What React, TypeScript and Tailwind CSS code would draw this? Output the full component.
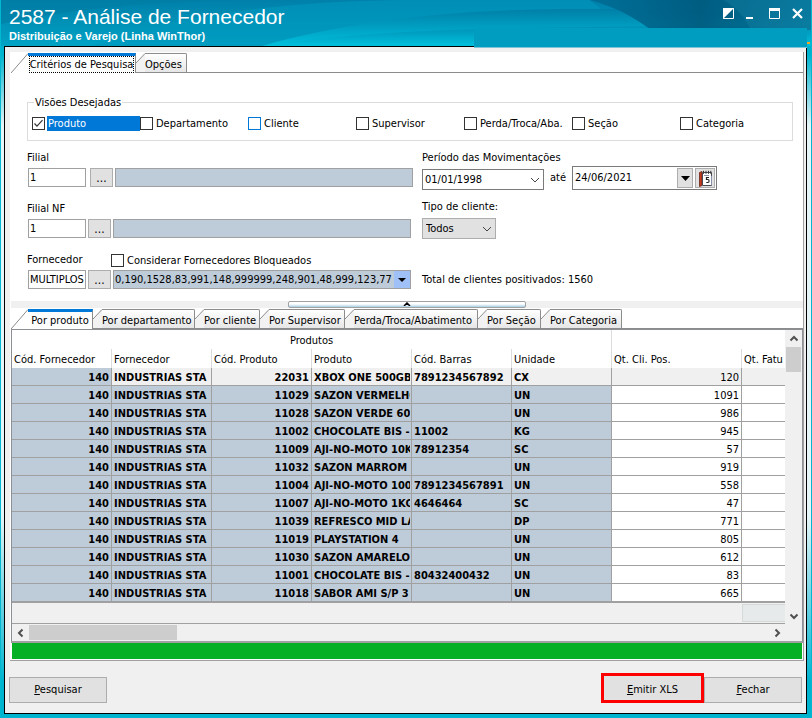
import type { ReactNode } from "react";
import clsx from "clsx";

const views = [
  { label: "Produto", state: "checked" },
  { label: "Departamento", state: "idle" },
  { label: "Cliente", state: "hover" },
  { label: "Supervisor", state: "idle" },
  { label: "Perda/Troca/Aba.", state: "idle" },
  { label: "Seção", state: "idle" },
  { label: "Categoria", state: "idle" },
];

const resultTabs = [
  { label: "Por departamento", width: "w-[102px]" },
  { label: "Por cliente", width: "w-[65px]" },
  { label: "Por Supervisor", width: "w-[85px]" },
  { label: "Perda/Troca/Abatimento", width: "w-[133px]" },
  { label: "Por Seção", width: "w-[63px]" },
  { label: "Por Categoria", width: "w-[81px]" },
];

const columns = ["Cód. Fornecedor", "Fornecedor", "Cód. Produto", "Produto", "Cód. Barras", "Unidade", "Qt. Cli. Pos.", "Qt. Fatu"];

const rows = [
  ["22031", "XBOX ONE 500GBE", "7891234567892", "CX", "120"],
  ["11029", "SAZON VERMELHO", "", "UN", "1091"],
  ["11028", "SAZON VERDE 60G", "", "UN", "986"],
  ["11002", "CHOCOLATE BIS -", "11002", "KG", "945"],
  ["11009", "AJI-NO-MOTO 10K", "78912354", "SC", "57"],
  ["11032", "SAZON MARROM", "", "UN", "919"],
  ["11004", "AJI-NO-MOTO 100", "7891234567891", "UN", "558"],
  ["11007", "AJI-NO-MOTO 1KG", "4646464", "SC", "47"],
  ["11039", "REFRESCO MID LA", "", "DP", "771"],
  ["11019", "PLAYSTATION 4", "", "UN", "805"],
  ["11030", "SAZON AMARELO", "", "UN", "612"],
  ["11001", "CHOCOLATE BIS -", "80432400432", "UN", "83"],
  ["11018", "SABOR AMI S/P 3", "", "UN", "665"],
];

function Chevron({ direction }: { direction: "up" | "down" | "left" | "right" }) {
  const paths = {
    up: "M1.5 6.5 5 3l3.5 3.5",
    down: "M1.5 3.5 5 7l3.5-3.5",
    left: "M6.5 1.5 3 5l3.5 3.5",
    right: "M3.5 1.5 7 5 3.5 8.5",
  };
  return (
    <svg viewBox="0 0 10 10" className="w-[10px] h-[10px]" fill="none" stroke="#505050" strokeWidth="2">
      <path d={paths[direction]} />
    </svg>
  );
}

function ActiveTab({ children, width, focused }: { children: ReactNode; width: string; focused?: boolean }) {
  return (
    <button role="tab" aria-selected="true" className="flex h-full items-stretch">
      <svg viewBox="0 0 17 20" className="w-[17px] h-full" preserveAspectRatio="none">
        <path d="M0 20 17 .5" stroke="#8c8c8c" fill="none" />
      </svg>
      <span className={clsx("flex items-center justify-center whitespace-nowrap border-t-[3px] border-r border-t-[#0078d7] border-r-[#8c8c8c]", width)}>
        <span className={clsx("pt-px", focused && "outline outline-1 outline-dotted outline-black")}>{children}</span>
      </span>
    </button>
  );
}

function Tab({ children, width }: { children: ReactNode; width: string }) {
  return (
    <button role="tab" aria-selected="false" className={clsx("flex h-full items-stretch border-b border-[#8c8c8c]", width)}>
      <svg viewBox="0 0 9 19" className="w-[9px] h-full shrink-0" preserveAspectRatio="none">
        <path d="M0 10 9 .5V19H0z" fill="#f2f2f2" />
        <path d="M0 10 9 .5" stroke="#8c8c8c" fill="none" />
      </svg>
      <span className="flex flex-1 items-center pt-1 whitespace-nowrap border-t border-r border-[#8c8c8c] rounded-tr-xs bg-linear-to-b from-white to-[#e6e6e6]">
        {children}
      </span>
    </button>
  );
}

function Check({ label, state = "idle" }: { label: string; state?: string }) {
  return (
    <label className="flex items-center gap-0.5 h-[14px]">
      <span className="relative w-[13px] h-[13px] shrink-0">
        <input
          type="checkbox"
          defaultChecked={state === "checked"}
          className={clsx(
            "peer block appearance-none w-[13px] h-[13px] border bg-white",
            state === "hover" ? "border-[#0078d7]" : "border-[#333333]"
          )}
        />
        <svg viewBox="0 0 13 13" className="hidden peer-checked:block absolute inset-0 pointer-events-none" fill="none" stroke="#333" strokeWidth="1.2">
          <path d="M2.5 6.5 5 9.2l5.5-6" />
        </svg>
      </span>
      <span className={clsx("px-px h-[15px] leading-4 whitespace-nowrap", state === "checked" && "flex-1 bg-[#0078d7] text-white")}>{label}</span>
    </label>
  );
}

function Lookup({ id, label, value, gap, children }: { id: string; label: ReactNode; value: string; gap: string; children: ReactNode }) {
  return (
    <div>
      <div className="flex h-[14px] items-center mb-[3px] leading-4">{label}</div>
      <div className="flex h-[19px] pl-px">
        <input id={id} type="text" defaultValue={value} className="w-[58px] border border-[#a0a0a0] bg-white px-px" />
        <button className={clsx("w-[23px] border border-[#adadad] bg-[#e1e1e1] mr-0.5 text-xs leading-3", gap)}>...</button>
        {children}
      </div>
    </div>
  );
}

function TitleBar() {
  return (
    <header className="relative h-[46px] overflow-hidden text-white">
      <svg viewBox="0 0 812 46" preserveAspectRatio="none" className="absolute inset-0 w-full h-full">
        <defs>
          <linearGradient id="base" x1="0" y1="0" x2="0" y2="1">
            <stop offset="0" stopColor="#0080aa" />
            <stop offset="1" stopColor="#00a3c4" />
          </linearGradient>
          <linearGradient id="swell" x1="0" y1="0" x2="0" y2="1">
            <stop offset="0" stopColor="#007fa8" />
            <stop offset="1" stopColor="#00c0dc" />
          </linearGradient>
          <linearGradient id="corner" x1="0" y1="0" x2="1" y2="0">
            <stop offset="0" stopColor="#006c95" />
            <stop offset="0.5" stopColor="#00567a" />
            <stop offset="1" stopColor="#007095" />
          </linearGradient>
        </defs>
        <path fill="url(#base)" d="M0 0h812v46H0z" />
        <path fill="#0098be" d="M90 46C180 14 280 2 400 0h190l60 46z" opacity=".6" />
        <path fill="url(#swell)" d="M262 46C370 14 500 8 600 9c80 0 140 2 212 8v29z" />
        <path fill="url(#swell)" d="M262 46C370 30 480 26 812 26v20z" opacity=".5" />
        <path fill="url(#corner)" d="M590 0c30 8 48 20 62 30h160V0z" opacity=".85" />
        <path fill="#2794b5" d="M724 0c14 8 22 18 28 30h60V0z" opacity=".22" />
        <path fill="#007da3" d="M0 0h230C150 2 60 10 0 24z" opacity=".6" />
      </svg>
      <div className="relative flex justify-between px-2 pt-[5px] font-['Liberation_Sans',sans-serif]">
        <div>
          <h1 className="text-[21px] leading-6">2587 - Análise de Fornecedor</h1>
          <p className="text-[11px] leading-[14px] font-bold">Distribuição e Varejo (Linha WinThor)</p>
        </div>
        <div className="flex h-4 items-center gap-3">
          <button aria-label="Tema">
            <svg viewBox="0 0 11 11" className="w-[11px] h-[11px]">
              <path d="M.5.5h10v10H.5z" fill="#005f83" stroke="#fff" />
              <path d="M0 0h11L0 11z" fill="#fff" />
            </svg>
          </button>
          <button aria-label="Minimizar">
            <svg viewBox="0 0 11 11" className="w-[11px] h-[11px]">
              <path d="M0 9h7v2H0z" fill="#fff" />
            </svg>
          </button>
          <button aria-label="Maximizar">
            <svg viewBox="0 0 11 11" className="w-[11px] h-[11px]">
              <path d="M.5.5h10v10H.5z" fill="none" stroke="#fff" />
              <path d="M0 0h11v3H0z" fill="#fff" />
            </svg>
          </button>
          <button aria-label="Fechar janela">
            <svg viewBox="0 0 11 11" className="w-[11px] h-[11px]">
              <path d="m1 1 9 9m0-9-9 9" stroke="#fff" strokeWidth="2.2" />
            </svg>
          </button>
        </div>
      </div>
    </header>
  );
}

function Criteria() {
  return (
    <div className="pl-[17px] pr-3 pb-3">
      <fieldset className="border border-[#dcdcdc] mt-[22px] px-1 pt-[7px] pb-[10px]">
        <legend className="ml-0.5 px-px h-[14px] leading-4">Visões Desejadas</legend>
        <div className="grid grid-cols-[repeat(7,108px)]">
          {views.map((view) => (
            <Check key={view.label} label={view.label} state={view.state} />
          ))}
        </div>
      </fieldset>

      <div className="flex mt-[9px]">
        <div className="flex flex-col gap-[15px] w-[395px] pt-px">
          <Lookup id="filial" value="1" gap="ml-1" label={<label htmlFor="filial">Filial</label>}>
            <input aria-label="Nome da filial" readOnly className="w-[298px] border border-[#a0a0a0] bg-[#becbd9]" />
          </Lookup>
          <Lookup id="filial-nf" value="1" gap="ml-0.5" label={<label htmlFor="filial-nf">Filial NF</label>}>
            <input aria-label="Nome da filial NF" readOnly className="w-[298px] border border-[#a0a0a0] bg-[#becbd9]" />
          </Lookup>
          <Lookup
            id="fornecedor"
            value="MULTIPLOS"
            gap="ml-0.5"
            label={
              <>
                <label htmlFor="fornecedor" className="w-[84px]">Fornecedor</label>
                <Check label="Considerar Fornecedores Bloqueados" />
              </>
            }
          >
            <div className="relative w-[298px]">
              <select aria-label="Fornecedores" className="appearance-none w-full h-full border border-[#a0a0a0] bg-[#becbd9] px-px">
                <option>0,190,1528,83,991,148,999999,248,901,48,999,123,77</option>
              </select>
              <span className="absolute right-px inset-y-px w-4 flex items-center justify-center bg-[#a0c0f8] pointer-events-none">
                <svg viewBox="0 0 8 4" className="w-2 h-1"><path d="M0 0h8L4 4z" /></svg>
              </span>
            </div>
          </Lookup>
        </div>

        <div className="flex flex-col">
          <label htmlFor="inicio" className="h-[14px] leading-4">Período das Movimentações</label>
          <div className="flex items-end mt-0.5">
            <div className="relative w-[122px] h-[21px]">
              <select id="inicio" className="appearance-none w-full h-full border border-[#7a7a7a] bg-white px-0.5">
                <option>01/01/1998</option>
              </select>
              <svg viewBox="0 0 10 6" className="absolute right-1 top-2 w-[10px] h-[6px] pointer-events-none" fill="none" stroke="#444">
                <path d="m1 1 4 4 4-4" />
              </svg>
            </div>
            <label htmlFor="fim" className="w-7 text-center self-center">até</label>
            <div className="flex w-[145px] h-6 border border-[#7a7a7a] bg-white p-px">
              <input id="fim" type="text" defaultValue="24/06/2021" className="flex-1 min-w-0 px-px" />
              <button aria-label="Abrir lista" className="w-4 border border-[#adadad] bg-[#e1e1e1] flex items-center justify-center">
                <svg viewBox="0 0 9 5" className="w-[9px] h-[5px]"><path d="M0 0h9L4.500 5z" /></svg>
              </button>
              <button aria-label="Calendário" className="w-5 ml-0.5 border border-[#adadad] bg-[#e1e1e1] flex items-center justify-center">
                <svg viewBox="0 0 15 17" className="w-[15px] h-[17px]">
                  <path d="M1.500 2.500 4 1.500v14L1.500 16.500z" fill="#c23a1e" stroke="#6b2415" strokeWidth=".8" />
                  <path d="M4.500 2.500h9v13h-9z" fill="#fff" stroke="#4a4a55" />
                  <path d="M5.500.8v3M8 .8v3M10.500.8v3M12.800.8v3" stroke="#333" />
                  <path d="M6 5.500h5M13.500 6v9" stroke="#8a90a8" />
                  <path d="M11 7.500H8.500v2H10c1.400 0 1.400 3 0 3H8.300" fill="none" stroke="#222" strokeWidth="1.200" />
                </svg>
              </button>
            </div>
          </div>
          <label htmlFor="tipo" className="h-[14px] leading-4 mt-[9px]">Tipo de cliente:</label>
          <div className="relative w-[74px] h-[21px] mt-[5px]">
            <select id="tipo" className="appearance-none w-full h-full border border-[#adadad] bg-[#e1e1e1] px-[3px]">
              <option>Todos</option>
            </select>
            <svg viewBox="0 0 10 6" className="absolute right-1 top-2 w-[10px] h-[6px] pointer-events-none" fill="none" stroke="#444">
              <path d="m1 1 4 4 4-4" />
            </svg>
          </div>
          <p className="h-[14px] leading-4 mt-[33px]">Total de clientes positivados: 1560</p>
        </div>
      </div>
    </div>
  );
}

function ResultsTable() {
  return (
    <table className="w-full table-fixed border-separate border-spacing-0 leading-[17px]">
      <colgroup>
        {columns.map((name, i) => (
          <col key={name} className={clsx(i < 6 && "w-[100px]", i === 6 && "w-[130px]")} />
        ))}
      </colgroup>
      <thead>
        <tr className="h-[19px]">
          <th colSpan={6} className="font-normal p-0 pt-px border-r border-[#dcdcdc]">Produtos</th>
          <th colSpan={2} />
        </tr>
        <tr className="h-[19px]">
          {columns.map((name) => (
            <th key={name} className="font-normal text-left p-0 pt-px pl-0.5 border-r border-[#dcdcdc] last:border-r-0 whitespace-nowrap overflow-hidden">
              {name}
            </th>
          ))}
        </tr>
      </thead>
      <tbody>
        {rows.map((row, r) => (
          <tr key={row[0]} className="h-[18px]">
            {["140", "INDUSTRIAS STA", ...row, ""].map((cell, c) => (
              <td
                key={c}
                className={clsx(
                  "p-0 pl-0.5 h-[18px] border-b border-r border-[#a0a0a0] last:border-r-0",
                  c < 6 && "font-bold",
                  c === 3 ? "pr-px" : "pr-0.5",
                  (c === 0 || c === 2 || c === 6) && "text-right",
                  r === 0 && c > 0 ? "bg-[#f0f0f0]" : c < 6 ? "bg-[#becbd9]" : "bg-white"
                )}
              >
                <div className="h-[17px] leading-[19px] overflow-hidden whitespace-nowrap">{cell}</div>
              </td>
            ))}
          </tr>
        ))}
      </tbody>
    </table>
  );
}

export default function App() {
  return (
    <div className="min-h-screen flex flex-col bg-[linear-gradient(#009dc1_0,#00b4cf_55px,#e4f4f7_125px,#e4f4f7_72%,#00b4cf_95%)] border-x border-[#00b8d2] text-[11px] leading-[14px] text-black font-['DejaVu_Sans_Condensed','DejaVu_Sans',sans-serif]">
      <TitleBar />
      <main className="relative flex-1 flex flex-col ml-[3px] mr-1 mb-1 border border-black bg-[#f0f0f0] pt-[5px] pl-1 pr-0.5 pb-[9px]">
        <div className="absolute -top-[19px] -right-px left-[469px] h-5 bg-[#009dc1] border-b border-[#7cc4d6]" />
        <div className="absolute -top-[5px] -right-1 w-[3px] h-0.5 bg-[#f5a623]" />
        <div className="ml-px bg-white border-r border-b border-[#a0a0a0]">
          <div role="tablist" className="flex h-[21px] pl-px pt-px">
            <ActiveTab width="w-[108px]" focused>Critérios de Pesquisa</ActiveTab>
            <Tab width="w-[51px]">Opções</Tab>
            <div className="flex-1 border-b border-[#8c8c8c]" />
          </div>

          <Criteria />

          <div className="h-[7px] ml-px bg-[#f0f0f0] flex justify-center">
            <button aria-label="Recolher" className="w-[238px] border border-[#a0a0a0] rounded-xs bg-linear-to-b from-white from-40% to-[#a8cfe4] flex justify-center">
              <svg viewBox="0 0 8 4" className="w-2 h-1" fill="none" stroke="#000" strokeWidth="1.500">
                <path d="M1 4 4 1l3 3" />
              </svg>
            </button>
          </div>

          <div role="tablist" className="flex h-[20px] ml-px mt-px">
            <ActiveTab width="w-[65px]">Por produto</ActiveTab>
            {resultTabs.map((tab) => (
              <Tab key={tab.label} width={tab.width}>{tab.label}</Tab>
            ))}
            <div className="flex-1 border-b border-[#8c8c8c]" />
          </div>

          <div className="ml-px border border-[#8c9096] border-b-2 border-b-[#a0a0a0]">
            <div className="flex">
              <div className="flex-1 min-w-0">
                <ResultsTable />
                <div className="flex justify-end h-[22px] bg-[#f0f0f0] border-t border-b border-[#a0a0a0]">
                  <div className="w-[43px] my-px border border-r-0 border-[#d4d9d9] bg-[#e6eaea]" />
                </div>
              </div>
              <div className="w-[17px] flex flex-col items-center bg-[#f0f0f0]">
                <button aria-label="Rolar para cima" className="h-[17px] flex items-center"><Chevron direction="up" /></button>
                <div className="w-[15px] h-[25px] bg-[#cdcdcd]" />
                <button aria-label="Rolar para baixo" className="h-[17px] mt-auto flex items-center"><Chevron direction="down" /></button>
              </div>
            </div>
            <div className="flex items-center h-[17px] pr-[17px] bg-[#f0f0f0]">
              <button aria-label="Rolar para a esquerda" className="w-[17px] flex justify-center"><Chevron direction="left" /></button>
              <div className="w-[148px] h-[15px] bg-[#cdcdcd]" />
              <button aria-label="Rolar para a direita" className="w-[17px] ml-auto flex justify-center"><Chevron direction="right" /></button>
            </div>
          </div>
          <div role="progressbar" aria-label="Progresso" aria-valuenow={100} className="ml-0.5 mr-px h-4 mb-px bg-[#06b025]" />
        </div>

        <div className="flex items-end mt-auto pb-px">
          <button className="w-[98px] h-[26px] border border-[#adadad] bg-[#e1e1e1]"><u>P</u>esquisar</button>
          <button className="ml-auto w-[103px] h-[30px] pt-1 border-[3px] border-[#ff0000] bg-[#e1e1e1]"><u>E</u>mitir XLS</button>
          <button className="w-[98px] h-[26px] border border-[#adadad] bg-[#e1e1e1] mr-0.5"><u>F</u>echar</button>
        </div>
      </main>
    </div>
  );
}
